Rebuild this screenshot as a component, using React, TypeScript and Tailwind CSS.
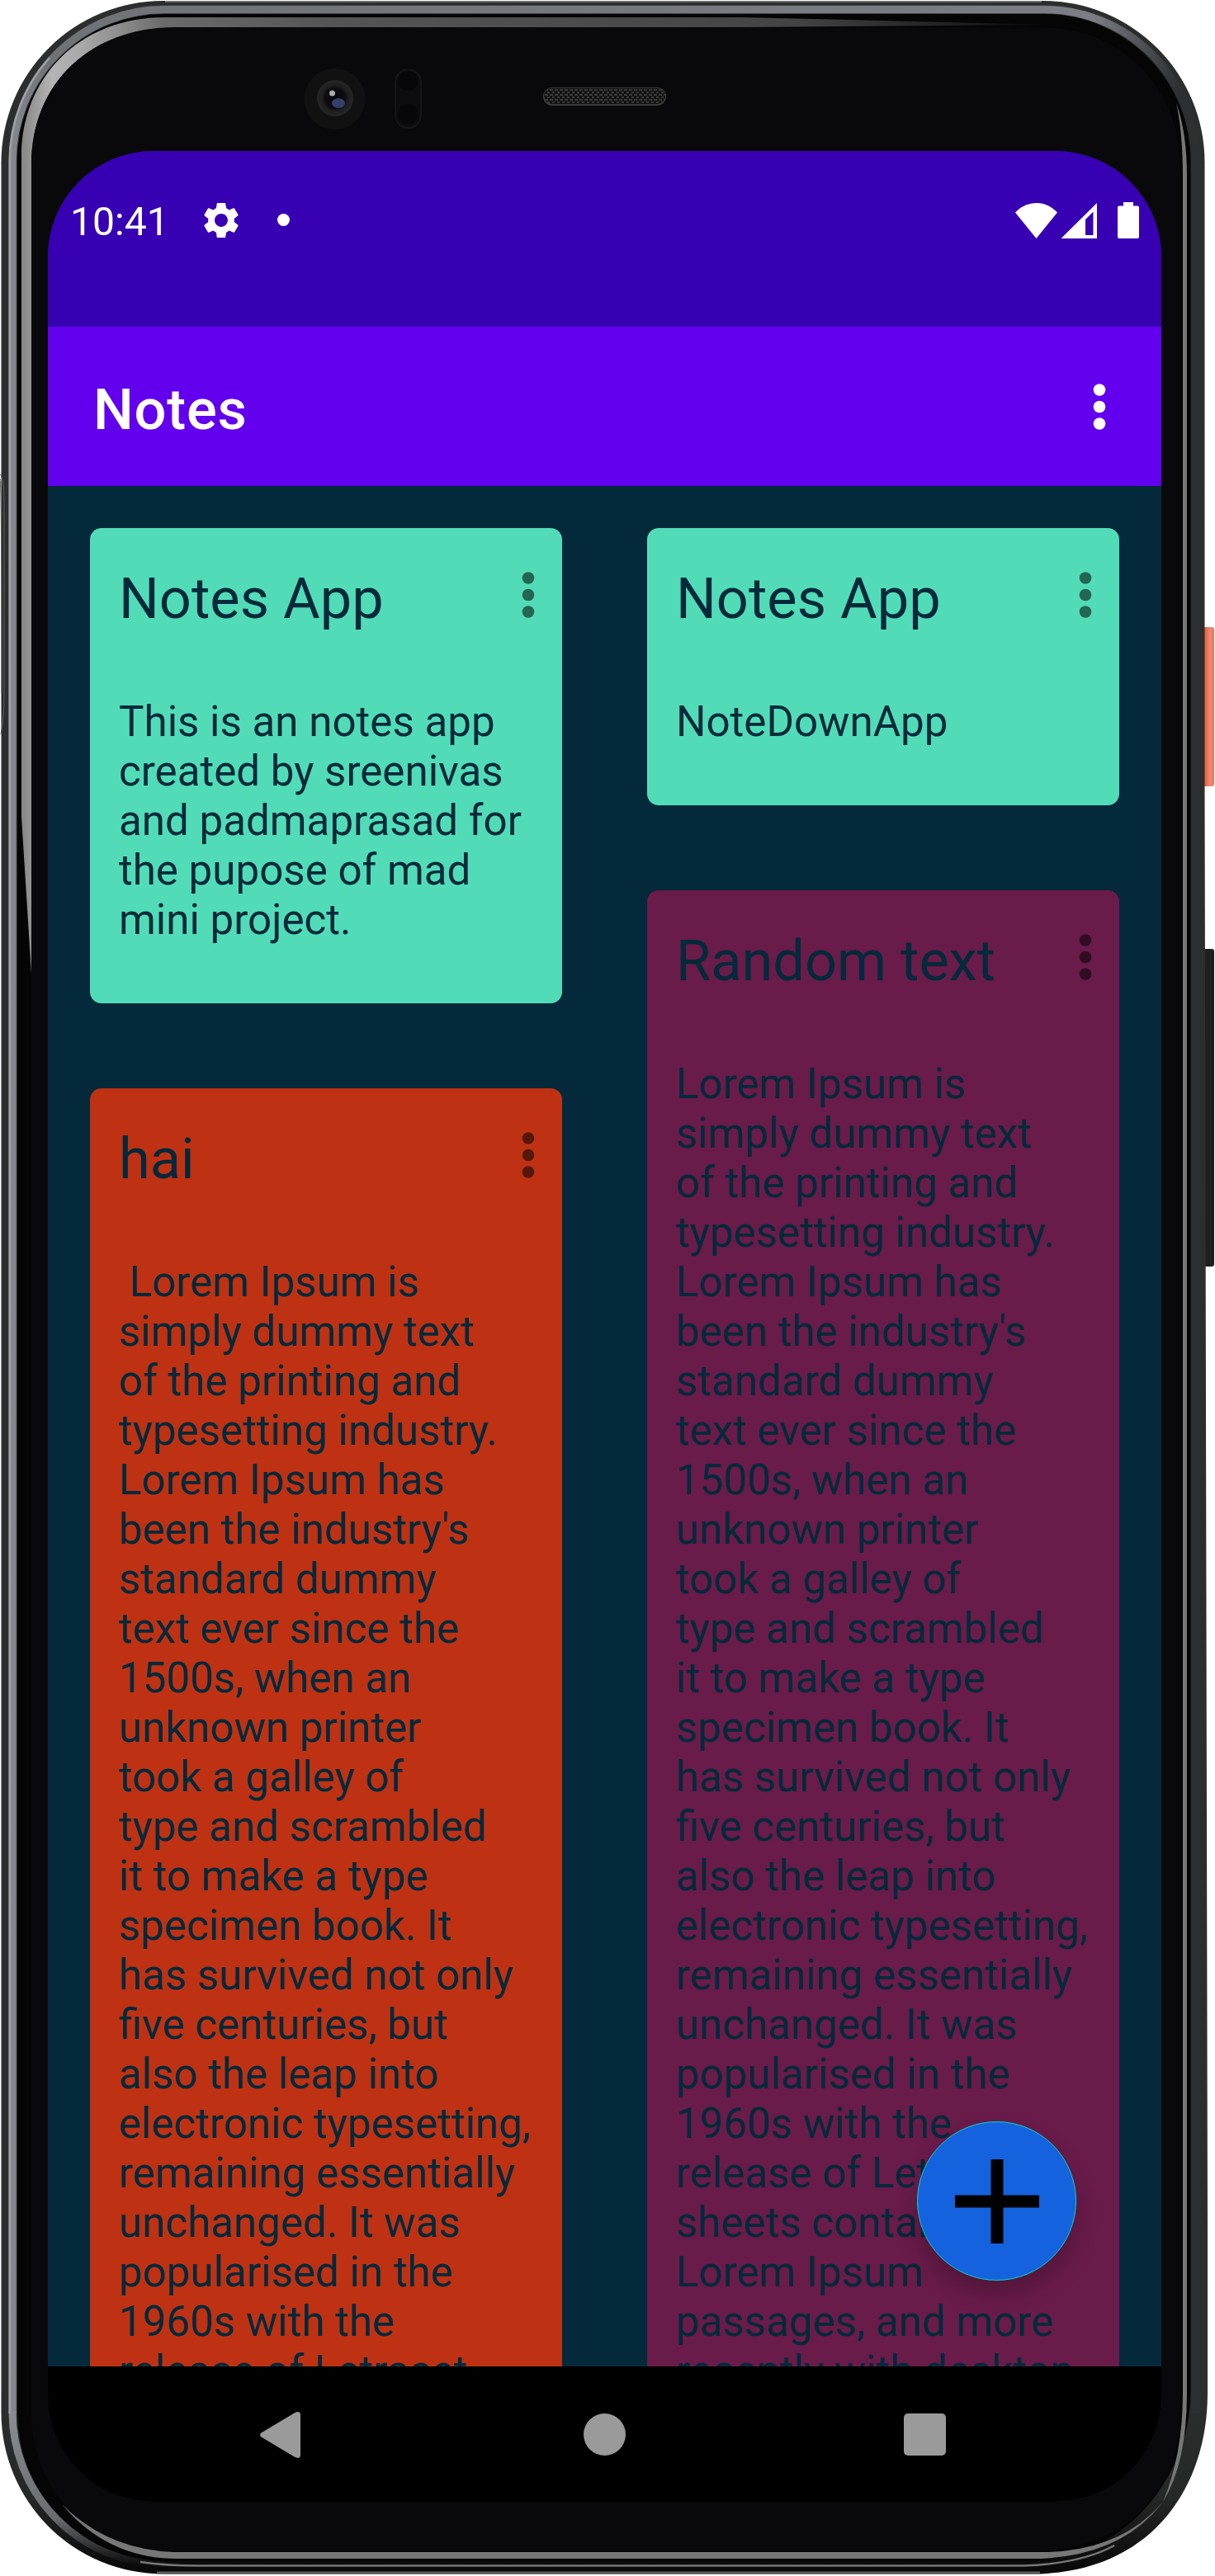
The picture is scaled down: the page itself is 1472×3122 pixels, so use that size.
import React from "react";

const LOREM = [
  "simply dummy text", "of the printing and", "typesetting industry.", "Lorem Ipsum has", "been the industry's",
  "standard dummy", "text ever since the", "1500s, when an", "unknown printer", "took a galley of",
  "type and scrambled", "it to make a type", "specimen book. It", "has survived not only", "five centuries, but",
  "also the leap into", "electronic typesetting,", "remaining essentially", "unchanged. It was", "popularised in the",
  "1960s with the", "release of Letraset",
];
const LOREM_REST = ["sheets containing", "Lorem Ipsum", "passages, and more", "recently with desktop"];

const LEFT = [
  { title: "Notes App", color: "bg-[#51dcb7]", lines: ["This is an notes app", "created by sreenivas", "and padmaprasad for", "the pupose of mad", "mini project."] },
  { title: "hai", color: "bg-[#be3213]", lines: [" Lorem Ipsum is", ...LOREM] },
];
const RIGHT = [
  { title: "Notes App", color: "bg-[#51dcb7]", lines: ["NoteDownApp"] },
  { title: "Random text", color: "bg-[#691b4a]", lines: ["Lorem Ipsum is", ...LOREM, ...LOREM_REST] },
];

function MoreDots({ className }: { className: string }) {
  return (
    <svg viewBox="0 0 16 56" className={"h-[56px] w-[16px] shrink-0 " + className} fill="currentColor">
      <circle cx="8" cy="7.5" r="7.3" />
      <circle cx="8" cy="28" r="7.3" />
      <circle cx="8" cy="48.5" r="7.3" />
    </svg>
  );
}

function NoteCard({ title, color, lines }: { title: string; color: string; lines: string[] }) {
  return (
    <article className={"shrink-0 rounded-[14px] pb-[71px] pl-[35px] text-[#04293a] " + color}>
      <header className="flex h-[205px] items-start justify-between pr-[33px] pt-[45px]">
        <h2 className="text-[68.5px] leading-[81px]">{title}</h2>
        <MoreDots className="mt-[8px] text-black/54" />
      </header>
      <div className="text-[51.1px] leading-[60px]">
        {lines.map((l, i) => (
          <p key={i} className="whitespace-pre">{l}</p>
        ))}
      </div>
    </article>
  );
}

function PhoneFrame() {
  return (
    <svg className="absolute inset-0" width="1472" height="3122" viewBox="0 0 1472 3122" fill="none">
      <defs>
        <linearGradient id="ring" x1="0" y1="0" x2="1472" y2="0" gradientUnits="userSpaceOnUse">
          <stop offset="0" stopColor="#8b8e94" />
          <stop offset="0.04" stopColor="#6f7277" />
          <stop offset="0.9" stopColor="#7b7e84" />
          <stop offset="0.97" stopColor="#2d2f31" />
        </linearGradient>
        <linearGradient id="ringFoot" x1="0" y1="2920" x2="0" y2="3108" gradientUnits="userSpaceOnUse">
          <stop offset="0" stopColor="#8b8e94" />
          <stop offset="0.7" stopColor="#6a6c70" />
          <stop offset="1" stopColor="#0d0d0e" />
        </linearGradient>
        <linearGradient id="bodyFill" x1="0" y1="2900" x2="0" y2="3110" gradientUnits="userSpaceOnUse">
          <stop offset="0" stopColor="#2c2d2d" />
          <stop offset="0.6" stopColor="#262727" />
          <stop offset="1" stopColor="#0a0a0b" />
        </linearGradient>
        <linearGradient id="glass" x1="26" y1="0" x2="1270" y2="0" gradientUnits="userSpaceOnUse">
          <stop offset="0" stopColor="#868686" />
          <stop offset="0.03" stopColor="#b4b4b4" />
          <stop offset="0.06" stopColor="#a8a8a8" />
          <stop offset="0.14" stopColor="#6a6a6a" />
          <stop offset="0.3" stopColor="#555" />
          <stop offset="0.75" stopColor="#444" />
          <stop offset="1" stopColor="#0a0a0a" />
        </linearGradient>
        <linearGradient id="power" x1="1460" y1="0" x2="1472" y2="0" gradientUnits="userSpaceOnUse">
          <stop offset="0" stopColor="#e0624a" />
          <stop offset="0.5" stopColor="#f08b74" />
          <stop offset="1" stopColor="#e4735b" />
        </linearGradient>
        <radialGradient id="lens">
          <stop offset="0" stopColor="#05050a" />
          <stop offset="0.55" stopColor="#0b0b10" />
          <stop offset="0.7" stopColor="#1d1d1d" />
          <stop offset="1" stopColor="#262626" />
        </radialGradient>
        <pattern id="mesh" width="6" height="6" patternUnits="userSpaceOnUse">
          <rect width="6" height="6" fill="#111" />
          <path d="M0 1h4M3 4h3" stroke="#4a4a4a" strokeWidth="1.4" />
        </pattern>
      </defs>
      {/* side buttons */}
      <rect x="1456" y="760" width="15" height="193" rx="3" fill="url(#power)" />
      <rect x="1456" y="1150" width="15" height="385" rx="3" fill="#1e1f1f" />
      {/* body */}
      <path d="M1.500 197A196 196 0 0 1 198 1H1264A196 196 0 0 1 1459.500 197V950L1463 2700V2900C1463 3020 1390 3119.500 1250 3119.500H198A196 196 0 0 1 1.500 2924Z" fill="url(#bodyFill)" />
      <path d="M200 2H1262" stroke="#7f8482" strokeWidth="1.500" />
      <path d="M190 3118H1260" stroke="#5c5c5c" strokeWidth="3" />
      {/* metal ring */}
      <path d="M15 2925V195A184 184 0 0 1 199 11.500H1265A184 184 0 0 1 1449 195V2925" stroke="url(#ring)" strokeWidth="9.500" />
      <path d="M15 2922A184 184 0 0 0 199 3107" stroke="url(#ringFoot)" strokeWidth="9" />
      <path d="M12 2925V195A187 187 0 0 1 60 70" stroke="#a2a4a9" strokeWidth="2" />
      <path d="M1442.500 200V2900C1442 2990 1375 3103 1240 3104H199A180 180 0 0 1 21 2925V195A178 178 0 0 1 199 17H1265A178 178 0 0 1 1442.500 200Z" fill="#050506" />
      <path d="M170 3105Q200 3109.500 240 3109.500H1240Q1310 3107 1350 3085" stroke="#777" strokeWidth="2.500" />
      {/* glass edge */}
      <path d="M26 990V190C26 95 95 21 200 21H900L1270 30L900 33H213C110 33 38 100 38 200V1180Z" fill="url(#glass)" />
      <path d="M38 200C38 100 110 33.500 213 33.500H1265C1360 33.500 1430 110 1430 200V2925C1430 3020 1360 3092 1250 3092H213C110 3092 38 3020 38 2925Z" fill="#09090b" />
      <path d="M1425 125Q1433 160 1433 215V2900Q1433 2975 1409 3032Q1438 2985 1438 2900V215Q1438 160 1425 125Z" fill="#777" />
      <path d="M1409 3032Q1360 3090 1270 3093H210Q130 3090 75 3035Q130 3101 215 3101H1260Q1360 3097 1409 3032Z" fill="#777" />
      <path d="M0 575Q5 578 5 610V840Q5 870 1 890M0 580Q2 590 2 840" stroke="#59605c" strokeWidth="1" />
      {/* camera, sensor and earpiece */}
      <circle cx="405.500" cy="120" r="37" fill="#111112" />
      <circle cx="406" cy="119" r="22" fill="url(#lens)" />
      <ellipse cx="410" cy="125" rx="8" ry="6" fill="#34406a" />
      <circle cx="402.500" cy="113" r="3.500" fill="#aaa" />
      <rect x="479" y="84" width="31" height="71" rx="15.500" fill="#0c0c0e" stroke="#151517" strokeWidth="2" />
      <circle cx="494.500" cy="98" r="12" fill="#070709" />
      <circle cx="494.500" cy="138" r="12" fill="#070709" />
      <rect x="658" y="106" width="149" height="22" rx="11" fill="#3c3c3c" />
      <rect x="659" y="107" width="147" height="19" rx="9.500" fill="url(#mesh)" />
    </svg>
  );
}

export default function App() {
  return (
    <div className="relative h-[3122px] w-[1472px] overflow-hidden bg-white pl-[58px] pt-[183px] font-[Roboto,sans-serif]">
      <PhoneFrame />
      <div className="relative flex h-[2849px] w-[1349px] flex-col overflow-hidden rounded-[128px] bg-[#04293a]">
        <div className="flex h-[213px] shrink-0 items-start bg-[#3700b3] pl-[27px] pt-[52px] text-white">
          <span className="mt-[2px] w-[120px] text-[48.1px] leading-[64px]">10:41</span>
          <svg viewBox="2 2 20 20" className="ml-[41px] mt-[10px] size-[44px]" fill="currentColor">
            <path d="M19.14 12.94c.04-.3.06-.61.06-.94 0-.32-.02-.64-.07-.94l2.030-1.580c.18-.14.23-.41.12-.61l-1.920-3.320c-.12-.22-.37-.29-.59-.22l-2.390.96c-.5-.38-1.030-.7-1.620-.94L14.400 2.810c-.04-.24-.24-.41-.48-.41h-3.840c-.24 0-.43.17-.47.41l-.36 2.540c-.59.24-1.130.57-1.620.94l-2.390-.96c-.22-.08-.47 0-.59.22L2.740 8.870c-.12.21-.08.47.12.61l2.030 1.580c-.05.3-.09.63-.09.94s.02.64.07.94l-2.030 1.580c-.18.14-.23.41-.12.61l1.920 3.320c.12.22.37.29.59.22l2.390-.96c.5.38 1.030.7 1.620.94l.36 2.540c.05.24.24.41.48.41h3.840c.24 0 .44-.17.47-.41l.36-2.540c.59-.24 1.130-.56 1.620-.94l2.390.96c.22.08.47 0 .59-.22l1.920-3.320c.12-.22.07-.47-.12-.61l-2.010-1.580zM12 15.600c-1.980 0-3.600-1.620-3.600-3.600s1.620-3.600 3.600-3.600 3.600 1.620 3.600 3.600-1.620 3.600-3.600 3.600z" />
          </svg>
          <span className="ml-[46px] mt-[24px] size-[15px] rounded-full bg-white" />
          <div className="ml-auto mr-[27px] mt-[9px] flex">
            <svg viewBox="0 0 150 46" className="h-[46px] w-[150px]" fill="currentColor">
              <path d="M0 13.500Q11 2 25.500 2T51 13.500L25.500 45Z" />
              <path fillRule="evenodd" d="M55.500 45L99 2V45ZM85 22V41H94.500V12.500Z" />
              <path d="M131 1h12v4.500h5q2 0 2 2V43q0 2-2 2h-22q-2 0-2-2V7.500q0-2 2-2h5Z" />
            </svg>
          </div>
        </div>
        <div className="flex h-[193px] shrink-0 items-center justify-between bg-[#6200ee] pl-[55px] pr-[67px] text-white">
          <h1 className="mt-[7px] text-[68.7px] font-medium leading-[81px] tracking-[0.8px]">Notes</h1>
          <MoreDots className="" />
        </div>
        <main className="flex h-[2279px] shrink-0 gap-[102px] overflow-hidden px-[51px] pt-[51px]">
          <div className="flex w-[572px] flex-col gap-[103px]">
            {LEFT.map((n) => <NoteCard key={n.title} {...n} />)}
          </div>
          <div className="flex w-[573px] flex-col gap-[103px] pl-px">
            {RIGHT.map((n) => <NoteCard key={n.title} {...n} />)}
          </div>
        </main>
        <nav className="flex h-[164px] shrink-0 items-start bg-black pl-[257px] pt-[55px]">
          <svg viewBox="0 0 49 56" className="h-[56px] w-[49px]" fill="#9a9a9a">
            <path d="M1.500 25.500L42 1.200Q49-2 49 4V52Q49 58 42 54.800L1.500 30.500Q-1.500 28 1.500 25.500Z" />
          </svg>
          <span className="ml-[343px] mt-[2px] size-[51px] rounded-full bg-[#9a9a9a]" />
          <span className="ml-[337px] mt-[2px] size-[51px] rounded-[5px] bg-[#9a9a9a]" />
        </nav>
        <button className="absolute left-[1053px] top-[2388px] flex size-[193px] items-center justify-center rounded-full border border-[#03dac5] bg-[#1562de] shadow-[0_16px_28px_rgba(0,0,0,0.22)]">
          <svg viewBox="0 0 102 102" className="size-[102px]">
            <path d="M51 0V102M0 51H102" stroke="#000" strokeWidth="15" />
          </svg>
        </button>
      </div>
    </div>
  );
}
